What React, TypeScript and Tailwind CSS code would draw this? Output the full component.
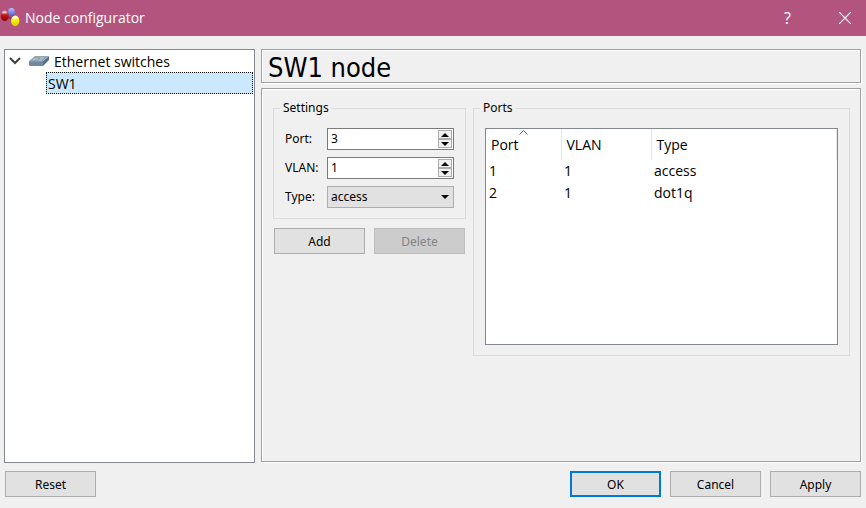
import { useState } from "react";
import type { ReactNode } from "react";

const pushButton =
  "h-[26px] w-[91px] border pt-px text-center leading-4 border-[#adadad] bg-[#e1e1e1]";

const frame =
  "border border-[#a0a0a0] shadow-[1px_1px_0_#fff,inset_1px_1px_0_#fff]";

function AppIcon() {
  return (
    <svg width="20" height="20" viewBox="0 0 20 20" aria-hidden="true">
      <defs>
        <linearGradient id="red" x1="0" y1="0" x2="0" y2="1">
          <stop offset="0" stopColor="#e89090" />
          <stop offset="0.45" stopColor="#c81414" />
          <stop offset="1" stopColor="#8e0000" />
        </linearGradient>
        <linearGradient id="blue" x1="0" y1="0" x2="0" y2="1">
          <stop offset="0" stopColor="#b8c4f8" />
          <stop offset="1" stopColor="#4560dc" />
        </linearGradient>
        <linearGradient id="yellow" x1="0" y1="0" x2="0" y2="1">
          <stop offset="0" stopColor="#fffbb0" />
          <stop offset="0.5" stopColor="#f6ec00" />
          <stop offset="1" stopColor="#d8cc00" />
        </linearGradient>
      </defs>
      <path d="M5 8 11 4M5 8l10 4M11 4l4 8" stroke="#6d3a68" strokeWidth="2" />
      <ellipse cx="11.5" cy="4" rx="3.3" ry="4" fill="url(#blue)" />
      <ellipse cx="4.7" cy="7.7" rx="4" ry="5.2" fill="url(#red)" />
      <ellipse cx="15.2" cy="12.8" rx="4.2" ry="5.4" fill="url(#yellow)" />
      <ellipse cx="4.4" cy="4.4" rx="2.4" ry="1.2" fill="#fff" opacity="0.6" />
      <ellipse cx="15.2" cy="9.6" rx="2.6" ry="1.4" fill="#fff" opacity="0.7" />
    </svg>
  );
}

function SwitchIcon() {
  return (
    <svg width="20" height="10" viewBox="0 0 20 10" aria-hidden="true">
      <path d="M0 5h14v5H1L0 9z" fill="#6d89a3" />
      <path d="M14 5 20 0v4l-6 6z" fill="#56708a" />
      <path d="M0 5 6 0h14l-6 5z" fill="#93a5b3" />
      <path d="M5 3h4M11 2h4M4 4l2-1M10 4h3" stroke="#c3ced7" strokeWidth="0.8" />
      <path d="M0 5.5h14" stroke="#8099ae" />
    </svg>
  );
}

function Group({ title, className, children }: { title: string; className: string; children: ReactNode }) {
  return (
    <fieldset className={"min-w-0 border border-[#dcdcdc] " + className}>
      <legend className="ml-[6px] h-4 px-[3px] leading-4">{title}</legend>
      <div className="px-[11px] pt-3">{children}</div>
    </fieldset>
  );
}

function SpinBox({ id, label, value, onChange }: { id: string; label: string; value: number; onChange: (n: number) => void }) {
  const step = "flex h-[9px] w-[14px] items-center justify-center border border-[#adadad] bg-[#f0f0f0]";
  return (
    <div className="flex items-center">
      <label htmlFor={id} className="w-[42px] shrink-0">{label}</label>
      <div className="flex h-[22px] min-w-0 flex-1 items-center border border-[#7a7a7a] bg-white pr-px">
        <input
          id={id}
          type="number"
          min={1}
          value={value}
          onChange={(e) => onChange(Number(e.target.value))}
          className="w-full min-w-0 flex-1 bg-transparent pl-[3px] leading-4 outline-none [&::-webkit-inner-spin-button]:appearance-none"
        />
        <div className="flex shrink-0 flex-col bg-[#f0f0f0]">
          <button type="button" aria-label={"Increase " + id} className={step} onClick={() => onChange(value + 1)}>
            <svg width="8" height="4" viewBox="0 0 8 4" className="shrink-0"><path d="M4 0 8 4H0z" /></svg>
          </button>
          <button type="button" aria-label={"Decrease " + id} className={step} onClick={() => onChange(Math.max(1, value - 1))}>
            <svg width="8" height="4" viewBox="0 0 8 4" className="shrink-0"><path d="M4 4 8 0H0z" /></svg>
          </button>
        </div>
      </div>
    </div>
  );
}

const rows = [
  { port: 1, vlan: 1, type: "access" },
  { port: 2, vlan: 1, type: "dot1q" },
];

export default function App() {
  const [port, setPort] = useState(3);
  const [vlan, setVlan] = useState(1);
  const [type, setType] = useState("access");

  return (
    <div className="flex min-h-screen flex-col bg-[#f0f0f0] font-['Noto_Sans',sans-serif] text-[12px] leading-4 text-black">
      <header className="flex h-9 shrink-0 items-center bg-[#b3547e] text-white">
        <AppIcon />
        <h1 className="ml-[5px] flex-1 font-['Open_Sans',sans-serif] text-[14px]">Node configurator</h1>
        <button type="button" aria-label="Help" className="w-[57px] font-['Open_Sans',sans-serif] text-[16px]">?</button>
        <button type="button" aria-label="Close" className="flex w-[50px] pl-[23px]">
          <svg width="12" height="12" viewBox="0 0 12 12" fill="none" stroke="#fff" strokeWidth="1.2"><path d="m0 0 12 12M12 0 0 12" /></svg>
        </button>
      </header>

      <main className="flex flex-1 gap-[6px] pt-[13px] pr-[5px] pl-1">
        <nav className="w-[251px] shrink-0 border border-[#828790] bg-white font-['Open_Sans',sans-serif] text-[14px]">
          <ul>
            <li>
              <div className="flex h-[22px] items-center pl-1">
                <svg width="12" height="8" viewBox="0 0 12 8" fill="none" stroke="#404040" strokeWidth="2"><path d="m1 1 5 5 5-5" /></svg>
                <span className="ml-2"><SwitchIcon /></span>
                <span className="ml-[5px] pt-px">Ethernet switches</span>
              </div>
              <ul className="pr-px pl-[41px]">
                <li className="flex h-[22px] items-center border border-dotted border-black bg-[#cce8ff] pt-px pl-px">SW1</li>
              </ul>
            </li>
          </ul>
        </nav>

        <div className="mb-px flex min-w-0 flex-1 flex-col gap-[5px]">
          <h2 className={"flex h-[34px] items-center pt-1 pl-[6px] font-['DejaVu_Sans_Condensed','DejaVu_Sans',sans-serif] text-[27px] leading-7 " + frame}>SW1 node</h2>
          <section className={"flex flex-1 items-start gap-[7px] pt-[11px] pr-[10px] pl-[11px] " + frame}>
            <div className="w-[193px] shrink-0">
              <Group title="Settings" className="h-[119px]">
                <div className="flex flex-col gap-[7px]">
                  <SpinBox id="port" label="Port:" value={port} onChange={setPort} />
                  <SpinBox id="vlan" label="VLAN:" value={vlan} onChange={setVlan} />
                  <div className="flex items-center">
                    <label htmlFor="type" className="w-[42px] shrink-0">Type:</label>
                    <div className="relative flex-1">
                      <select
                        id="type"
                        value={type}
                        onChange={(e) => setType(e.target.value)}
                        className="block h-[22px] w-full appearance-none border border-[#adadad] bg-[#e1e1e1] pl-[3px] leading-4"
                      >
                        <option>access</option>
                        <option>dot1q</option>
                        <option>qinq</option>
                      </select>
                      <svg width="8" height="4" viewBox="0 0 8 4" className="pointer-events-none absolute top-[9px] right-[5px]"><path d="M4 4 8 0H0z" /></svg>
                    </div>
                  </div>
                </div>
              </Group>
              <div className="flex gap-[9px] pt-[9px] pl-px">
                <button type="button" className={pushButton}>Add</button>
                <button type="button" disabled className="h-[26px] w-[91px] border border-[#bfbfbf] bg-[#cccccc] pt-px text-center leading-4 text-[#838383]">Delete</button>
              </div>
            </div>

            <Group title="Ports" className="flex-1 pb-[10px]">
              <div className="h-[217px] border border-[#828790] bg-white font-['Open_Sans',sans-serif] text-[14px]">
                <table className="w-full table-fixed border-collapse text-left">
                  <colgroup>
                    <col className="w-[75px]" />
                    <col className="w-[90px]" />
                    <col />
                  </colgroup>
                  <thead>
                    <tr className="h-[31px]">
                      <th className="relative border-r border-[#e5e5e5] p-0 pl-[5px] font-normal">
                        Port
                        <svg width="9" height="5" viewBox="0 0 9 5" fill="none" stroke="#606060" className="absolute top-px left-[33px]"><path d="m0.5 4.5 4-4 4 4" /></svg>
                      </th>
                      <th className="border-r border-[#e5e5e5] p-0 pl-[5px] font-normal">VLAN</th>
                      <th className="border-r border-[#e5e5e5] p-0 pl-[5px] font-normal">Type</th>
                    </tr>
                  </thead>
                  <tbody>
                    {rows.map((r) => (
                      <tr key={r.port} className="h-[22px]">
                        <td className="p-0 pl-[3px]">{r.port}</td>
                        <td className="p-0 pl-[3px]">{r.vlan}</td>
                        <td className="p-0 pl-[3px]">{r.type}</td>
                      </tr>
                    ))}
                  </tbody>
                </table>
              </div>
            </Group>
          </section>
        </div>
      </main>

      <footer className="flex shrink-0 gap-[9px] pt-2 pr-[5px] pb-[11px] pl-[5px]">
        <button type="button" className={pushButton + " mr-auto"}>Reset</button>
        <button type="button" className="h-[26px] w-[91px] border-2 border-[#0078d7] bg-[#e1e1e1] pt-px text-center leading-4">OK</button>
        <button type="button" className={pushButton}>Cancel</button>
        <button type="button" className={pushButton}>Apply</button>
      </footer>
    </div>
  );
}
